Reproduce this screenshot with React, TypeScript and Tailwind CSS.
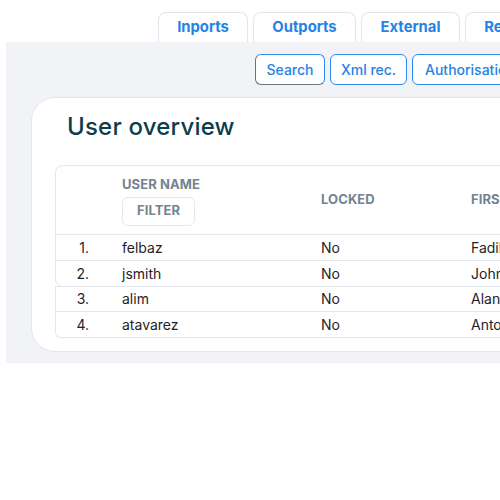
import React from "react";

const rows = [
  { n: "1.", user: "felbaz", locked: "No", first: "Fadil" },
  { n: "2.", user: "jsmith", locked: "No", first: "John" },
  { n: "3.", user: "alim", locked: "No", first: "Alan" },
  { n: "4.", user: "atavarez", locked: "No", first: "Antonio" },
];

function Row({ r, last }: { r: (typeof rows)[number]; last?: boolean }) {
  return (
    <div
      className={`grid grid-cols-[66px_199px_150px_200px] items-center text-[14px] text-[#1f2328] ${
        last ? "h-[25px]" : "h-[26px] border-b border-[#e3e8ee]"
      }`}
    >
      <div className="text-right pr-[33px]">{r.n}</div>
      <div>{r.user}</div>
      <div>{r.locked}</div>
      <div>{r.first}</div>
    </div>
  );
}

const tabs = [
  { t: "Inports", w: "w-[90px]" },
  { t: "Outports", w: "w-[103px]" },
  { t: "External", w: "w-[99px]" },
  { t: "Reports", w: "w-[95px]" },
];

export default function App() {
  return (
    <div
      className="w-[500px] h-[500px] overflow-hidden bg-white"
      style={{ fontFamily: "Inter, 'Noto Sans', sans-serif" }}
    >
      <div className="w-[900px]">
        <div className="flex gap-[5px] pl-[158px] pt-[12px]">
          {tabs.map((t) => (
            <div
              key={t.t}
              className={`${t.w} h-[30px] flex items-center justify-center border border-b-0 border-[#e1e6ec] rounded-t-[8px] bg-white text-[14.8px] font-bold text-[#2582e6] whitespace-nowrap`}
            >
              {t.t}
            </div>
          ))}
        </div>
        <div className="ml-[6px] bg-[#f1f3f7] pt-[12px] pb-[11px] pl-[25px]">
          <div className="flex gap-[5px] pl-[224px]">
            <div className="w-[70px] h-[31px] flex items-center justify-center rounded-[6px] border border-[#6b7380] border-t-[#2d8cf0] border-r-[#2d8cf0] bg-white text-[14px] font-medium text-[#2582e6] whitespace-nowrap">
              Search
            </div>
            <div className="w-[77px] h-[31px] flex items-center justify-center rounded-[6px] border border-[#2d8cf0] bg-white text-[14px] font-medium text-[#2582e6] whitespace-nowrap">
              Xml rec.
            </div>
            <div className="h-[31px] px-[12px] flex items-center rounded-[6px] border border-[#2d8cf0] bg-white text-[14px] font-medium text-[#2582e6] whitespace-nowrap">
              Authorisation
            </div>
          </div>
          <div className="mt-[12px] bg-white border border-[#e3e7ec] rounded-[24px] h-[255px] pl-[23px]">
            <div className="pl-[12px] pt-[11px] h-[67px] text-[24px] font-medium text-[#0d3c4c] tracking-[0.2px]">
              User overview
            </div>
            <div className="border border-[#e3e8ee] rounded-[8px] h-[122px] border-r-0 rounded-r-none">
              <div className="grid grid-cols-[66px_199px_150px_200px] h-[69px] border-b border-[#e3e8ee] text-[13px] font-bold text-[#73838f] tracking-[0.1px]">
                <div />
                <div className="flex flex-col justify-center pt-[1px]">
                  <div className="leading-[16px]">USER NAME</div>
                  <div className="mt-[5px] w-[73px] h-[29px] flex items-center justify-center border border-[#e3e8ee] rounded-[6px]">
                    FILTER
                  </div>
                </div>
                <div className="flex items-center">LOCKED</div>
                <div className="flex items-center">FIRST NAME</div>
              </div>
              <Row r={rows[0]} />
              <Row r={rows[1]} />
              <div className="-ml-[1px] -mt-[1px] border-l border-b border-[#e3e8ee] rounded-bl-[6px]">
                <Row r={rows[2]} />
                <Row r={rows[3]} last />
              </div>
            </div>
          </div>
        </div>
      </div>
    </div>
  );
}
